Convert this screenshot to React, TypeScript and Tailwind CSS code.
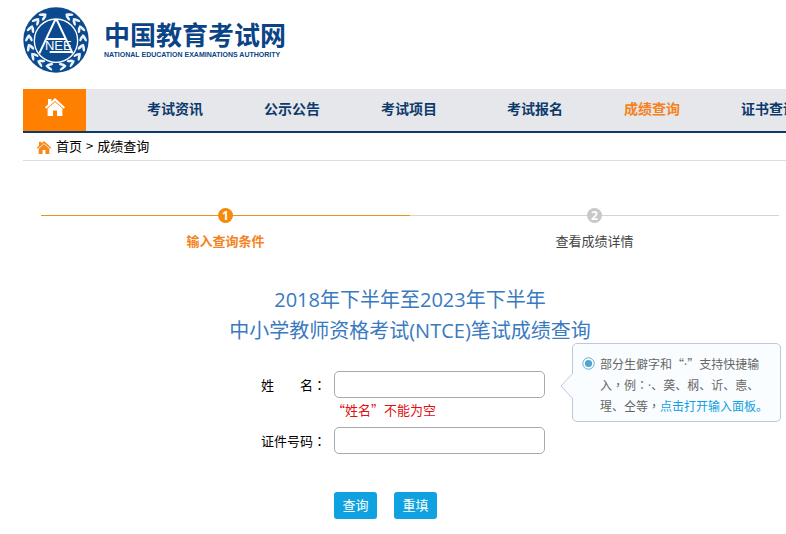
import { useState } from "react";
import type { FormEvent, ReactNode } from "react";
import { clsx } from "clsx";

const navItems = [
  { label: "考试资讯" },
  { label: "公示公告" },
  { label: "考试项目" },
  { label: "考试报名", newGroup: true },
  { label: "成绩查询", active: true },
  { label: "证书查询" },
];

const steps = [
  { label: "输入查询条件", active: true },
  { label: "查看成绩详情", active: false },
];

const leafAngles = [10, 30, 50, 70, 90, 110, 130, 148];

// full-width punctuation drawn in the middle of its box
const Mid = ({ children }: { children: ReactNode }) => (
  <span lang="zh-TW" className="font-['Noto_Sans_CJK_TC',sans-serif] leading-none">
    {children}
  </span>
);

const Dot = () => <span className="font-['Open_Sans',sans-serif] leading-none">·</span>;

const Emblem = () => (
  <svg viewBox="8 6 198 198" className="size-[66px] shrink-0" aria-hidden="true">
    <circle cx="107" cy="105" r="98" fill="#0b4a8f" />
    {[1, -1].map((side) => (
      <g key={side} transform={`translate(107 105) scale(${side} 1)`} fill="#eef4fa">
        {leafAngles.map((angle) => (
          <g key={angle} transform={`rotate(${-angle}) translate(0 80)`}>
            <ellipse cx="3" cy="8" rx="12" ry="4" transform="rotate(-28)" />
            <ellipse cx="3" cy="-6" rx="10" ry="4" transform="rotate(24)" />
          </g>
        ))}
      </g>
    ))}
    <circle cx="107" cy="107" r="65" fill="#0b4a8f" stroke="#fff" strokeWidth="4" />
    <path
      d="M57 145 L104 46 H110 L157 145 M80 102 H136 M88 141 H156"
      fill="none"
      stroke="#fff"
      strokeWidth="6"
    />
    <text
      x="114"
      y="136"
      textAnchor="middle"
      fill="#fff"
      fontSize="39"
      className="font-['Liberation_Sans',sans-serif]"
    >
      NEE
    </text>
  </svg>
);

const HomeIcon = ({ className }: { className?: string }) => (
  <svg viewBox="0 0 20 18" className={className} fill="currentColor" aria-hidden="true">
    <path d="M10 0 L20 9.3 L18.8 10.8 L10 3 L1.2 10.8 L0 9.3 L3 6.5 V1 H6.4 V3.4 Z" />
    <path d="M10 4 L17.4 10.6 V18 H12 V12.4 H8 V18 H2.6 V10.6 Z" />
  </svg>
);

const Header = () => (
  <header className="flex items-center gap-[15px] pt-[7px]">
    <Emblem />
    <div className="whitespace-nowrap text-[#0a4486]">
      <div className="text-[26px] leading-[30px] font-bold">中国教育考试网</div>
      <div className="font-['Liberation_Sans',sans-serif] text-[7px] leading-[12px] font-bold">
        NATIONAL EDUCATION EXAMINATIONS AUTHORITY
      </div>
    </div>
  </header>
);

const Nav = () => (
  <nav className="mt-4 flex h-11 overflow-hidden border-b-2 border-[#0d3a6b] bg-[#e6e7eb]">
    <a
      href="#"
      aria-label="首页"
      className="flex w-[63px] shrink-0 justify-center bg-[#ff8000] pt-[9px] text-white"
    >
      <HomeIcon className="h-[18px] w-5" />
    </a>
    <ul className="flex gap-[61px] pl-[61px] text-sm leading-[38px] font-bold whitespace-nowrap">
      {navItems.map((item) => (
        <li key={item.label} className={clsx("shrink-0", item.newGroup && "ml-[9px]")}>
          <a href="#" className={item.active ? "text-[#f58220]" : "text-[#0d3a6b]"}>
            {item.label}
          </a>
        </li>
      ))}
    </ul>
  </nav>
);

const Steps = () => (
  <ol className="mt-[47px] grid grid-cols-2">
    {steps.map((step, i) => (
      <li key={step.label} className="text-center">
        <div className="flex items-center">
          <span className={clsx("h-px flex-1", step.active ? "bg-[#e8941c]" : "bg-[#d5d5d5]")} />
          <span
            className={clsx(
              "size-[15px] rounded-full font-['Open_Sans',sans-serif] text-xs leading-[15px] font-bold text-white",
              step.active ? "bg-[#f58a0b]" : "bg-[#c8c8c8]"
            )}
          >
            {i + 1}
          </span>
          <span className={clsx("h-px flex-1", step.active ? "bg-[#e8941c]" : "bg-[#d5d5d5]")} />
        </div>
        <div
          className={clsx(
            "mt-2 leading-5",
            step.active ? "font-bold text-[#f58220]" : "text-[#444]"
          )}
        >
          {step.label}
        </div>
      </li>
    ))}
  </ol>
);

const InputTip = () => (
  <div className="absolute -top-7 left-[311px] flex w-[209px] gap-[5px] rounded-[5px] border border-[#bcc8dd] bg-[#fafdff] pt-[9px] pb-[5px] pl-[9px] text-xs leading-[21px] text-[#666]">
    <svg
      viewBox="0 0 13 26"
      className="absolute top-[29px] -left-[13px] h-[26px] w-[13px]"
      aria-hidden="true"
    >
      <path d="M13 0 L1 13 L13 26" fill="#fafdff" stroke="#bcc8dd" />
    </svg>
    <svg viewBox="0 0 13 13" className="mt-1 size-[13px] shrink-0" aria-hidden="true">
      <circle cx="6.5" cy="6.5" r="5.7" fill="#fff" stroke="#62aed3" />
      <circle cx="6.5" cy="6.5" r="3.6" fill="#4ba6d0" />
    </svg>
    <p className="whitespace-nowrap">
      部分生僻字和“
      <Dot />
      ”支持快捷输
      <br />
      入<Mid>，</Mid>例<Mid>：</Mid>
      <Dot />
      、䶮、㭎、䜣、㥁、
      <br />
      瑆、仝等<Mid>，</Mid>
      <a href="#" className="text-[#119fdf]">
        点击打开输入面板。
      </a>
    </p>
  </div>
);

const inputClass =
  "h-[27px] w-[211px] rounded-[5px] border border-[#a9a9a9] bg-white px-2 outline-none";
const buttonClass = "h-[27px] w-[43px] rounded-[3px] bg-[#10a2e0] pb-0.5 text-white";

const QueryForm = () => {
  const [name, setName] = useState("");
  const [idNumber, setIdNumber] = useState("");
  const handleSubmit = (e: FormEvent) => {
    e.preventDefault();
  };
  const handleReset = () => {
    setName("");
    setIdNumber("");
  };
  return (
    <form
      onSubmit={handleSubmit}
      onReset={handleReset}
      className="mx-auto mt-[25px] w-[298px]"
    >
      <div className="relative flex items-center">
        <label htmlFor="name" className="flex w-[73px] items-center">
          <span className="flex w-[52px] justify-between">
            <span>姓</span>
            <span>名</span>
          </span>
          <Mid>：</Mid>
        </label>
        <input
          id="name"
          type="text"
          value={name}
          onChange={(e) => setName(e.target.value)}
          aria-describedby="name-error"
          className={inputClass}
        />
        <InputTip />
      </div>
      <p id="name-error" className="h-[29px] pl-[71px] leading-6 text-[#e01010]">
        {name === "" && "“姓名”不能为空"}
      </p>
      <div className="flex items-center">
        <label htmlFor="id-number" className="w-[73px] whitespace-nowrap">
          证件号码<Mid>：</Mid>
        </label>
        <input
          id="id-number"
          type="text"
          value={idNumber}
          onChange={(e) => setIdNumber(e.target.value)}
          className={inputClass}
        />
      </div>
      <div className="mt-[38px] flex gap-[17px] pl-[73px]">
        <button type="submit" className={buttonClass}>
          查询
        </button>
        <button type="reset" className={buttonClass}>
          重填
        </button>
      </div>
    </form>
  );
};

export default function App() {
  return (
    <div
      lang="zh-CN"
      className="overflow-hidden bg-white pb-4 pl-[23px] font-['Noto_Sans_CJK_SC',sans-serif] text-[13px] text-black"
    >
      <Header />
      <Nav />
      <div className="flex h-7 items-center gap-1 border-b border-[#ddd] pb-0.5 pl-[13px]">
        <HomeIcon className="mt-1 h-[13px] w-4 text-[#f58a1c]" />
        <a href="#">首页</a>
        <span>&gt;</span>
        <span>成绩查询</span>
      </div>
      <main className="pr-[7px] pl-[18px]">
        <Steps />
        <h1 className="mt-[33px] text-center font-['Open_Sans','Noto_Sans_CJK_SC',sans-serif] text-xl leading-[31px] text-[#3a7abf]">
          2018年下半年至2023年下半年
          <br />
          中小学教师资格考试(NTCE)笔试成绩查询
        </h1>
        <QueryForm />
      </main>
    </div>
  );
}
